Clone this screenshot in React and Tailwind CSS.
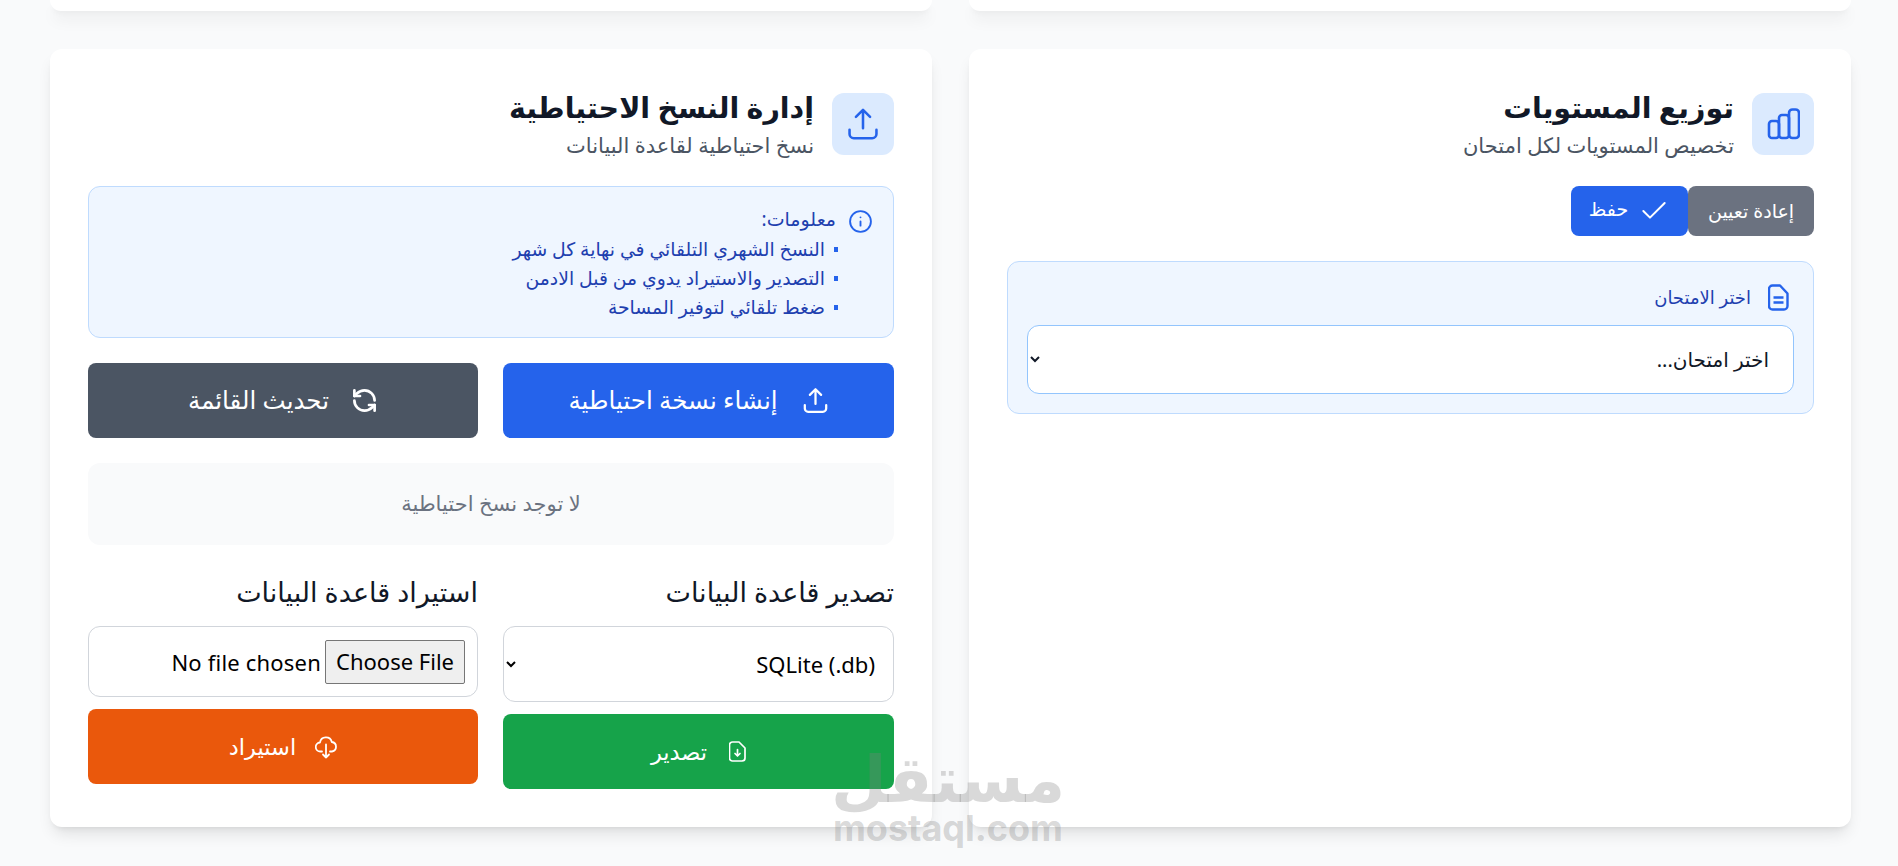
import { Check, Info, RefreshCcw } from "lucide-react";

const font = "font-['Noto_Sans','DejaVu_Sans',sans-serif]";

function UploadIcon({ size, width = 1.8 }) {
  return (
    <svg width={size} height={size} viewBox="0 0 24 24" fill="none" stroke="currentColor" strokeWidth={width} strokeLinecap="round" strokeLinejoin="round">
      <path d="M12 15V2.5M7 7l5-5 5 5" />
      <path d="M2.5 16v3a3 3 0 0 0 3 3h13a3 3 0 0 0 3-3v-3" />
    </svg>
  );
}

function ChartIcon() {
  return (
    <svg width="33" height="32" viewBox="0 0 33 32" fill="none" stroke="currentColor" strokeWidth="2.6">
      <rect x="2" y="13" width="10" height="17" rx="3" />
      <rect x="12" y="7" width="10" height="23" rx="3" />
      <rect x="22" y="1.5" width="10" height="28.5" rx="3.5" />
    </svg>
  );
}

function FileIcon() {
  return (
    <svg width="21" height="27" viewBox="0 0 21 27" fill="none" stroke="currentColor" strokeWidth="2.4" strokeLinejoin="round">
      <path d="M4.5 1.5h7.5l7.5 8v12.5a3.5 3.5 0 0 1-3.5 3.5h-11.5a3.5 3.5 0 0 1-3.500-3.500v-17a3.500 3.500 0 0 1 3.500-3.500z" />
      <path d="M5.500 13.500h10M5.500 18.500h10" />
    </svg>
  );
}

function FileDownIcon() {
  return (
    <svg width="17" height="21" viewBox="0 0 17 21" fill="none" stroke="currentColor" strokeWidth="1.7" strokeLinecap="round" strokeLinejoin="round">
      <path d="M3.500 1h6.500l6 6v10a3 3 0 0 1-3 3h-9.500a3 3 0 0 1-3-3v-13a3 3 0 0 1 3-3z" />
      <path d="M8.500 8.500v6M6 12.500l2.500 2.500 2.500-2.500" />
    </svg>
  );
}

function CloudDownIcon() {
  return (
    <svg width="22" height="24" viewBox="0 0 22 24" fill="none" stroke="currentColor" strokeWidth="1.8" strokeLinecap="round" strokeLinejoin="round">
      <path d="M7 16.500h-1.500a4.500 4.500 0 0 1-.5-9 6 6 0 0 1 11.800-.5 4.800 4.800 0 0 1 .2 9.500h-2" />
      <path d="M11 9.500v13M8 19.500l3 3 3-3" />
    </svg>
  );
}

function CardHeader({ icon, title, sub }) {
  return (
    <div className="flex items-start gap-[18px] h-[62px]">
      <div className="w-[62px] h-[62px] rounded-xl bg-[#dbeafe] text-[#2563eb] flex items-center justify-center shrink-0">
        {icon}
      </div>
      <div>
        <h2 className="text-[28.5px] leading-[28px] font-bold text-[#111827]">{title}</h2>
        <p className="mt-[9px] text-[21px] leading-[30px] text-[#4b5563]">{sub}</p>
      </div>
    </div>
  );
}

export default function App() {
  return (
    <div dir="rtl" className={`${font} w-[1898px] h-[866px] overflow-hidden bg-[#f9fafb] pl-[47px] pr-[47px]`}>
      {/* previous row, cut off by the scroll */}
      <div className="grid grid-cols-2 gap-[37px] h-[11px] w-[1801px]">
        <div className="bg-white rounded-b-xl shadow-lg" />
        <div className="bg-white rounded-b-xl shadow-lg" />
      </div>

      <div className="grid grid-cols-2 gap-[37px] mt-[38px] w-[1801px]">
        {/* LEVELS */}
        <section className="bg-white rounded-xl shadow-lg pr-[37px] pl-[38px] pt-[44px] pb-[38px]">
          <CardHeader icon={<ChartIcon />} title="توزيع المستويات" sub="تخصيص المستويات لكل امتحان" />
          <div className="flex mt-[31px]">
            <button className="w-[126px] h-[50px] rounded-lg bg-[#6b7280] text-white text-[19px]">إعادة تعيين</button>
            <button className="w-[117px] h-[50px] rounded-lg bg-[#2563eb] text-white text-[19px] flex items-center justify-center gap-[10px]">
              <Check size={32} strokeWidth={1.5} />
              <span className="-translate-y-[2px]">حفظ</span>
            </button>
          </div>
          <div className="mt-[25px] h-[153px] rounded-xl bg-[#eff6ff] border border-[#bfdbfe] px-[19px] pt-[21px]">
            <div className="flex items-center gap-[17px] h-[28px] pr-[5px] text-[18px] text-[#1e40af]">
              <span className="text-[#2563eb]"><FileIcon /></span>
              <span>اختر الامتحان</span>
            </div>
            <select className="mt-[14px] w-full h-[69px] pr-[20px] pl-[2px] rounded-xl border border-[#93c5fd] bg-white text-[20px] text-[#111827]">
              <option>اختر امتحان...</option>
            </select>
          </div>
        </section>

        {/* BACKUPS */}
        <section className="bg-white rounded-xl shadow-lg pr-[38px] pl-[38px] pt-[44px] pb-[38px]">
          <CardHeader icon={<UploadIcon size={34} />} title="إدارة النسخ الاحتياطية" sub="نسخ احتياطية لقاعدة البيانات" />
          <div className="mt-[31px] h-[152px] rounded-xl bg-[#eff6ff] border border-[#bfdbfe] px-[20px] pt-[20px] text-[#1e40af]">
            <div className="flex items-center gap-[12px] h-[28px] text-[19px]">
              <Info size={25} className="text-[#2563eb]" strokeWidth={1.8} />
              <span className="-translate-y-[2px]">معلومات:</span>
            </div>
            <ul className="pr-[35px] text-[18.8px] leading-[29px]">
              <li className="flex items-center gap-[9px]">
                <span className="w-[4px] h-[5px] bg-[#2563eb] shrink-0" />
                النسخ الشهري التلقائي في نهاية كل شهر
              </li>
              <li className="flex items-center gap-[9px]">
                <span className="w-[4px] h-[5px] bg-[#2563eb] shrink-0" />
                التصدير والاستيراد يدوي من قبل الادمن
              </li>
              <li className="flex items-center gap-[9px]">
                <span className="w-[4px] h-[5px] bg-[#2563eb] shrink-0" />
                ضغط تلقائي لتوفير المساحة
              </li>
            </ul>
          </div>

          <div className="grid grid-cols-[391fr_390fr] gap-[25px] mt-[25px]">
            <button className="h-[75px] rounded-lg bg-[#2563eb] text-white text-[24.5px] flex items-center justify-center gap-[24px]">
              <UploadIcon size={27} width={2} />
              <span>إنشاء نسخة احتياطية</span>
            </button>
            <button className="h-[75px] rounded-lg bg-[#4b5563] text-white text-[24.5px] flex items-center justify-center gap-[22px]">
              <RefreshCcw size={27} strokeWidth={2.4} />
              <span>تحديث القائمة</span>
            </button>
          </div>

          <div className="mt-[25px] h-[82px] rounded-xl bg-[#f9fafb] flex items-center justify-center text-[21px] text-[#6b7280]">
            لا توجد نسخ احتياطية
          </div>

          <div className="grid grid-cols-[391fr_390fr] gap-[25px] mt-[29px] items-start">
            <div>
              <h3 className="text-[27px] leading-[36px] text-[#111827]">تصدير قاعدة البيانات</h3>
              <select className="mt-[16px] w-full h-[76px] pr-[14px] pl-[2px] rounded-xl border border-[#d1d5db] bg-white text-[22px] text-black">
                <option>SQLite (.db)</option>
              </select>
              <button className="mt-[12px] w-full h-[75px] rounded-lg bg-[#16a34a] text-white text-[22.5px] flex items-center justify-center gap-[22px]">
                <FileDownIcon />
                <span>تصدير</span>
              </button>
            </div>
            <div>
              <h3 className="text-[27px] leading-[36px] text-[#111827]">استيراد قاعدة البيانات</h3>
              <div className="mt-[16px] h-[71px] rounded-xl border border-[#d1d5db] bg-white pr-[12px] pl-[2px] flex items-center">
                <input
                  type="file"
                  className="w-full text-[22px] tracking-[0.2px] text-black file:tracking-normal file:text-[22px] file:w-[140px] file:h-[44px] file:bg-[#efefef] file:border file:border-[#767676] file:rounded-[2px]"
                />
              </div>
              <button className="mt-[12px] w-full h-[75px] rounded-lg bg-[#ea580c] text-white text-[22.5px] flex items-center justify-center gap-[19px]">
                <CloudDownIcon />
                <span>استيراد</span>
              </button>
            </div>
          </div>
        </section>
      </div>

      {/* mostaql watermark */}
      <div dir="rtl" className="absolute left-[835px] top-[737px] w-[226px] flex flex-col items-center text-[#808080]/30 font-bold pointer-events-none">
        <span className="text-[64px] leading-[76px] translate-y-[3px]">مستقل</span>
        <span dir="ltr" className="text-[36px] leading-[30px] font-['Inter',sans-serif]">mostaql.com</span>
      </div>
    </div>
  );
}
